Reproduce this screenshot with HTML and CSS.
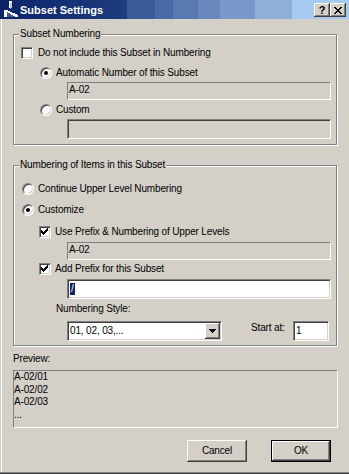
FILE: index.html
```html
<!DOCTYPE html>
<html>
<head>
<meta charset="utf-8">
<title>Subset Settings</title>
<link rel="stylesheet" href="styles.css">
</head>
<body>
<div class="window">
  <div class="titlebar">
    <svg class="app-icon" width="16" height="16" viewBox="0 0 16 16" shape-rendering="crispEdges">
      <rect x="7" y="0" width="3" height="2" fill="#ffffff"/>
      <rect x="7" y="2" width="3" height="5" fill="#c8c8c8"/>
      <rect x="7" y="2" width="1" height="5" fill="#ffffff"/>
      <rect x="8" y="7" width="1" height="1" fill="#9a9a9a"/>
      <path d="M2 9h3l11 5v2H2z" fill="#ffffff"/>
      <path d="M5 11l9 5H5z" fill="#3a5a9a"/>
    </svg>
    <span class="title">Subset Settings</span>
    <div class="title-btns">
      <span class="tbtn help">?</span>
      <span class="tbtn close">
        <svg width="8" height="7" viewBox="0 0 8 7" shape-rendering="crispEdges"><path d="M0 0h2v1H0zM6 0h2v1H6zM1 1h2v1H1zM5 1h2v1H5zM2 2h4v1H2zM3 3h2v1H3zM2 4h4v1H2zM1 5h2v1H1zM5 5h2v1H5zM0 6h2v1H0zM6 6h2v1H6z" fill="#000"/></svg>
      </span>
    </div>
  </div>

  <div class="content">
    <div class="group g1">
      <span class="legend">Subset Numbering</span>
      <div class="row r-exclude"><span class="cb"></span><span class="lbl">Do not include this Subset in Numbering</span></div>
      <div class="row r-auto"><span class="radio on"></span><span class="lbl">Automatic Number of this Subset</span></div>
      <div class="static">A-02</div>
      <div class="row r-custom"><span class="radio"></span><span class="lbl">Custom</span></div>
      <div class="edit disabled"></div>
    </div>

    <div class="group g2">
      <span class="legend">Numbering of Items in this Subset</span>
      <div class="row r-continue"><span class="radio"></span><span class="lbl">Continue Upper Level Numbering</span></div>
      <div class="row r-customize"><span class="radio on"></span><span class="lbl">Customize</span></div>
      <div class="row r-useprefix"><span class="cb"><svg width="7" height="7" viewBox="0 0 7 7" shape-rendering="crispEdges"><path d="M6 0h1v1H6zM5 1h2v1H5zM0 2h1v1H0zM4 2h3v1H4zM0 3h2v1H0zM3 3h3v1H3zM0 4h5v1H0zM1 5h3v1H1zM2 6h1v1H2z" fill="#000"/></svg></span><span class="lbl">Use Prefix &amp; Numbering of Upper Levels</span></div>
      <div class="static s2">A-02</div>
      <div class="row r-addprefix"><span class="cb"><svg width="7" height="7" viewBox="0 0 7 7" shape-rendering="crispEdges"><path d="M6 0h1v1H6zM5 1h2v1H5zM0 2h1v1H0zM4 2h3v1H4zM0 3h2v1H0zM3 3h3v1H3zM0 4h5v1H0zM1 5h3v1H1zM2 6h1v1H2z" fill="#000"/></svg></span><span class="lbl">Add Prefix for this Subset</span></div>
      <div class="edit prefix"><span class="sel">/</span></div>
      <div class="field-label">Numbering Style:</div>
      <div class="style-row">
        <div class="select">
          <span class="select-text">01, 02, 03,...</span>
          <span class="drop"><svg width="7" height="4" viewBox="0 0 7 4" shape-rendering="crispEdges"><path d="M0 0h7v1H0zM1 1h5v1H1zM2 2h3v1H2zM3 3h1v1H3z" fill="#000"/></svg></span>
        </div>
        <span class="start-label">Start at:</span>
        <div class="edit start">1</div>
      </div>
    </div>

    <div class="preview-label">Preview:</div>
    <div class="preview">
      <div>A-02/01</div>
      <div>A-02/02</div>
      <div>A-02/03</div>
      <div>...</div>
    </div>

    <div class="buttons">
      <button class="btn">Cancel</button>
      <button class="btn default">OK</button>
    </div>
  </div>
</div>
</body>
</html>
```

FILE: styles.css
```css
* { box-sizing: border-box; }
html, body { margin: 0; padding: 0; }
body {
  width: 349px;
  height: 474px;
  overflow: hidden;
  background: #D4D0C8;
  font-family: "Liberation Sans", Arial, sans-serif;
  font-size: 10px;
  line-height: 12px;
  letter-spacing: -0.15px;
  color: #000;
}
.window {
  width: 349px;
  height: 474px;
  background: #D4D0C8;
  display: flex;
  flex-direction: column;
  box-shadow: inset 0 -1px #404040, inset 0 -2px #808080, inset 1px 0 #D4D0C8, inset 2px 0 #ffffff;
}

/* title bar */
.titlebar {
  flex: none;
  height: 19px;
  display: flex;
  align-items: center;
  color: #fff;
  background: linear-gradient(to right,
    #0A246A 0, #1E3C80 127px,
    #3A5A98 127px, #3A5A98 155px,
    #4A6AA6 155px, #4A6AA6 173px,
    #5879B2 173px, #5879B2 198px,
    #6888BE 198px, #6888BE 220px,
    #7898C9 220px, #7898C9 255px,
    #8DAFDA 255px, #8DAFDA 292px,
    #A6CAF0 292px, #A6CAF0 100%);
}
.app-icon { flex: none; align-self: flex-start; margin: 1px 0 0 2px; }
.title {
  margin-left: 2px;
  padding-top: 1px;
  font-weight: bold;
  font-size: 11px;
  letter-spacing: 0;
  line-height: 12px;
  white-space: nowrap;
}
.title-btns {
  margin-left: auto;
  margin-right: 3px;
  align-self: flex-start;
  margin-top: 3px;
  display: flex;
}
.tbtn {
  width: 16px;
  height: 14px;
  display: flex;
  align-items: center;
  justify-content: center;
  background: #D4D0C8;
  color: #000;
  box-shadow: inset -1px -1px #404040, inset 1px 1px #ffffff, inset -2px -2px #808080;
}
.help { font-weight: bold; font-size: 11px; letter-spacing: 0; line-height: 12px; padding-bottom: 1px; }

/* content */
.content {
  display: flex;
  flex-direction: column;
  align-items: flex-start;
  padding-left: 13px;
}
.group {
  width: 324px;
  border: 1px solid #808080;
  box-shadow: inset 1px 1px #ffffff, 1px 1px #ffffff;
  display: flex;
  flex-direction: column;
  align-items: flex-start;
}
.g1 { margin-top: 15px; padding-bottom: 5px; }
.g2 { margin-top: 20px; padding-bottom: 4px; }
.legend {
  margin-top: -7px;
  margin-left: 5px;
  padding: 0 1px;
  background: #D4D0C8;
  line-height: 12px;
  white-space: nowrap;
}

.row { display: flex; align-items: center; height: 12px; white-space: nowrap; }
.lbl { line-height: 12px; }

.cb {
  flex: none;
  width: 12px;
  height: 12px;
  background: #fff;
  border: 1px solid;
  border-color: #808080 #ffffff #ffffff #808080;
  box-shadow: inset 1px 1px #404040, inset -1px -1px #D4D0C8;
  padding: 1px 0 0 1px;
  display: flex;
  align-items: flex-start;
}
.cb svg { display: block; }
.radio {
  flex: none;
  width: 12px;
  height: 12px;
  border-radius: 50%;
  background: #fff;
  border: 1px solid;
  border-color: #808080 #ffffff #ffffff #808080;
  box-shadow: inset 1px 1px #404040, inset -1px -1px #D4D0C8;
  display: flex;
  align-items: center;
  justify-content: center;
}
.radio.on::after {
  content: "";
  width: 4px;
  height: 4px;
  border-radius: 50%;
  background: #000;
}

.r-exclude { margin-top: 7px; margin-left: 7px; }
.r-exclude .lbl { margin-left: 5px; }
.r-auto { margin-top: 8px; margin-left: 26px; }
.r-custom { margin-top: 4px; margin-left: 26px; }
.r-auto .lbl, .r-custom .lbl { margin-left: 4px; }

.r-continue { margin-top: 12px; margin-left: 8px; }
.r-customize { margin-top: 9px; margin-left: 8px; }
.r-continue .lbl, .r-customize .lbl { margin-left: 4px; }
.r-useprefix { margin-top: 10px; margin-left: 25px; }
.r-addprefix { margin-top: 3px; margin-left: 25px; }
.r-useprefix .lbl, .r-addprefix .lbl { margin-left: 4px; }

.static {
  width: 264px;
  height: 18px;
  margin-top: 3px;
  margin-left: 53px;
  border: 1px solid;
  border-color: #808080 #ffffff #ffffff #808080;
  padding: 1px 0 0 1px;
  line-height: 12px;
}
.static.s2 { margin-top: 4px; }

.edit {
  width: 264px;
  height: 20px;
  margin-top: 3px;
  margin-left: 53px;
  border: 1px solid;
  border-color: #808080 #ffffff #ffffff #808080;
  box-shadow: inset 1px 1px #404040, inset -1px -1px #D4D0C8;
  background: #fff;
  padding: 3px 0 0 2px;
  line-height: 12px;
}
.edit.disabled { background: #D4D0C8; }
.edit.prefix { margin-top: 4px; padding-left: 2px; }
.sel {
  display: inline-block;
  background: #0A246A;
  color: #fff;
  padding: 0 1px;
  line-height: 12px;
}

.field-label { margin-top: 4px; margin-left: 42px; line-height: 12px; white-space: nowrap; }

.style-row {
  margin-top: 6px;
  margin-left: 53px;
  display: flex;
  align-items: flex-start;
}
.select {
  width: 155px;
  height: 20px;
  border: 1px solid;
  border-color: #808080 #ffffff #ffffff #808080;
  box-shadow: inset 1px 1px #404040, inset -1px -1px #D4D0C8;
  background: #fff;
  padding: 1px;
  display: flex;
  align-items: center;
}
.select-text { flex: 1; padding-left: 1px; line-height: 12px; white-space: nowrap; }
.drop {
  flex: none;
  width: 15px;
  height: 16px;
  background: #D4D0C8;
  box-shadow: inset -1px -1px #404040, inset 1px 1px #ffffff, inset -2px -2px #808080;
  display: flex;
  align-items: center;
  justify-content: center;
}
.drop svg { display: block; }
.start-label { width: 42px; margin-left: 29px; margin-top: 1px; line-height: 12px; white-space: nowrap; }
.edit.start { width: 36px; margin: 0; }

.preview-label { margin-top: 7px; line-height: 12px; }
.preview {
  width: 325px;
  height: 58px;
  margin-top: 5px;
  border: 1px solid;
  border-color: #808080 #ffffff #ffffff #808080;
  line-height: 12.5px;
}

.buttons {
  margin-top: 12px;
  margin-left: 174px;
  display: flex;
  gap: 24px;
}
.btn {
  width: 60px;
  height: 22px;
  padding: 0;
  border: 0;
  margin: 0;
  background: #D4D0C8;
  color: #000;
  font: inherit;
  letter-spacing: inherit;
  line-height: 12px;
  box-shadow: inset -1px -1px #404040, inset 1px 1px #ffffff, inset -2px -2px #808080;
}
.btn.default {
  box-shadow: inset 0 0 0 1px #000000, inset -2px -2px #404040, inset 2px 2px #ffffff, inset -3px -3px #808080;
}
```
